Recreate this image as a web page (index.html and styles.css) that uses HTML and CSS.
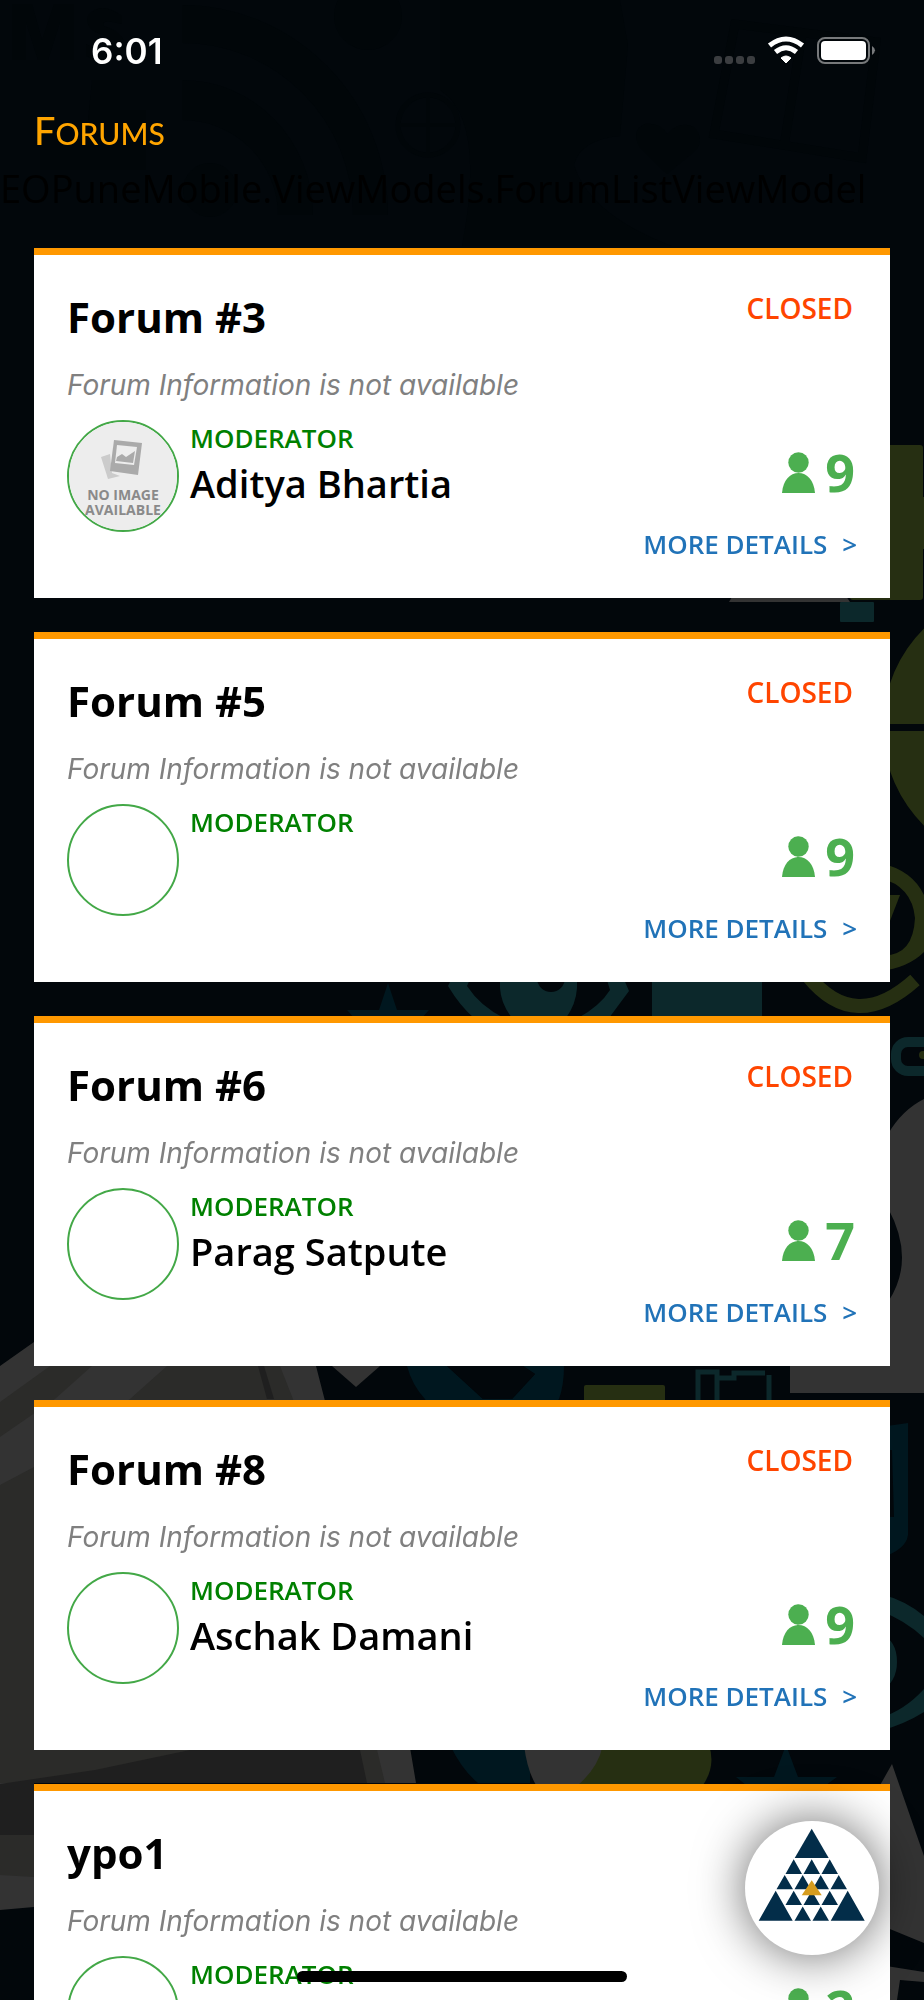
FILE: index.html
```html
<!DOCTYPE html>
<html lang="en">
<head>
    <meta charset="UTF-8">
    <meta name="viewport" content="width=device-width, initial-scale=1.0">
    <title>Forums</title>
    <link rel="stylesheet" href="styles.css">
</head>
<body>
    <svg class="backdrop" viewBox="0 0 924 2000" preserveAspectRatio="xMidYMid slice" aria-hidden="true">
        <rect width="924" height="2000" fill="#02070b"/>
        <!-- faint shapes behind the header -->
        <g fill="#010609">
            <path d="M182 5A206 210 0 0 1 388 215H353A171 172 0 0 0 182 43Z"/>
            <path d="M182 80A131 135 0 0 1 313 215H278A96 95 0 0 0 182 120Z"/>
            <circle cx="210" cy="190" r="27"/>
            <circle cx="368" cy="16" r="34"/>
            <path d="M440 0H620L628 45L620 136Q580 140 574 165Q590 215 672 246H462Q486 120 440 90Z"/>
            <path d="M667 174L640 148Q630 130 645 124Q660 122 667 134Q680 120 694 127Q706 140 694 152Z"/>
            <path d="M92 80H120V110H146V170H40V120H88Z"/>
            <path d="M12 60V4H32L42 40L54 4H74V60H60V22L48 60H38L26 22V60Z"/>
            <path d="M122 16Q100 0 88 16Q84 30 104 35Q118 42 98 50L86 44V56Q110 68 124 50Q128 34 104 26Q100 18 122 24Z"/>
        </g>
        <g fill="none" stroke="#010609" stroke-width="9">
            <path d="M735 24L876 42L862 158L714 134ZM802 34L784 146"/>
            <circle cx="428" cy="125" r="30" stroke-width="5"/>
            <path d="M398 125H458M428 95V155" stroke-width="4"/>
        </g>
        <!-- right edge -->
        <rect x="850" y="445" width="73" height="155" rx="3" fill="#262f12"/>
        <rect x="920" y="497" width="4" height="52" fill="#262f12"/>
        <path d="M736 590H842L850 602H729Z" fill="#333"/>
        <rect x="840" y="602" width="34" height="20" rx="1" fill="#0c282b"/>
        <path d="M883 724A139 139 0 0 1 1022 588V724ZM883 731A139 139 0 0 0 1022 866V731Z" fill="#262f12"/>
        <g fill="#262f12">
            <path d="M880 863Q912 870 924 895V952Q908 968 880 971V955Q913 958 915 918Q912 886 880 878Z"/>
            <path d="M880 895H900L888 926H880Z"/>
        </g>
        <path d="M808 976Q855 1034 915 980" fill="none" stroke="#262f12" stroke-width="14"/>
        <rect x="896" y="1042" width="60" height="29" rx="12" fill="none" stroke="#0c282b" stroke-width="10"/>
        <circle cx="923" cy="1055" r="4" fill="#262f12"/>
        <path d="M924 1099Q902 1110 888 1134V1208Q916 1260 888 1302H790V1393H924Z" fill="#333"/>
        <path d="M880 1427L908 1423V1535Q906 1550 880 1558V1517H894L892 1450H880Z" fill="#00171f"/>
        <path d="M880 1594Q905 1600 924 1616V1638Q905 1620 880 1611ZM880 1731Q905 1724 924 1712V1689Q905 1710 880 1718ZM880 1634Q897 1640 897 1662Q897 1682 880 1692Z" fill="#0c282b"/>
        <path d="M870 1803L892 1764L924 1856V1943L880 1925Z" fill="#333"/>
        <path d="M880 1965L924 1972V1982L900 1980L897 2000H880Z" fill="#333"/>
        <!-- strip between the second and third card -->
        <path d="M388 983L397 1010H429L420 1020H356L347 1010H379Z" fill="#00171f"/>
        <g fill="#0c282b">
            <path d="M456 970L448 986Q460 1006 474 1018H504Q480 1006 467 986L474 970Z"/>
            <path d="M620 970L629 991L609 1018H578Q600 1006 610 990L604 970Z"/>
            <path d="M500 970H577V988Q576 1004 566 1018H512Q501 1004 500 988Z"/>
            <rect x="652" y="975" width="110" height="45"/>
        </g>
        <circle cx="551" cy="978" r="14" fill="#02070b"/>
        <!-- strip between the third and fourth card -->
        <path d="M34 1342L0 1366V1910L34 1907V1783H416L402 1700L316 1366L300 1320H60Z" fill="#333"/>
        <g fill="#2b2b29">
            <path d="M50 1366H92L55 1399L0 1437V1402Z"/>
            <path d="M167 1366H280L293 1399L385 1783H0V1485L34 1467L130 1399Z"/>
            <path d="M0 1835H34V1877L0 1875Z"/>
        </g>
        <path d="M258 1366H264L274 1399H267Z" fill="#1f1f1f"/>
        <path d="M0 1784L95 1770L190 1750H360L367 1783H34V1835H0Z" fill="#1f1f1f"/>
        <path d="M332 1366H380L356 1387Z" fill="#333"/>
        <path d="M407 1366H447L483 1399L512 1399L535 1374L523 1366H564Q564 1385 559 1399L530 1430H440L425 1399Q412 1385 407 1366Z" fill="#00171f"/>
        <path d="M447 1366H523L535 1374L512 1399H483Z" fill="#02070b"/>
        <rect x="584" y="1385" width="81" height="20" rx="2" fill="#262f12"/>
        <path d="M698 1405V1372H717V1405M717 1378H734V1373H765M769 1375V1405" fill="none" stroke="#0c282b" stroke-width="5"/>
        <!-- strip above the last card -->
        <path d="M450 1745H530V1783H478Q462 1770 450 1745Z" fill="#00171f"/>
        <path d="M600 1745H709Q716 1766 703 1785H570Z" fill="#262f12"/>
        <path d="M524 1745H603Q598 1768 578 1785H536Q527 1770 524 1745Z" fill="#333"/>
        <path d="M786 1745L798 1777H837L826 1785H746L736 1777H774Z" fill="#00171f"/>
    </svg>

    <div class="app">
        <div class="status-bar">
            <span class="clock">6:01</span>
            <svg class="status-icons" width="164" height="30" viewBox="0 0 164 30" aria-hidden="true">
                <g fill="#3b3d40">
                    <rect x="1" y="20" width="8" height="8" rx="3"/>
                    <rect x="12" y="20" width="8" height="8" rx="3"/>
                    <rect x="23" y="20" width="8" height="8" rx="3"/>
                    <rect x="34" y="20" width="8" height="8" rx="3"/>
                </g>
                <g fill="none" stroke="#fff" stroke-width="5">
                    <path d="M56.500 9.500Q73 -3.500 89.500 9.500"/>
                    <path d="M62.500 16Q73 7.500 83.500 16"/>
                </g>
                <path d="M68 22Q73 18 78 22L73 27Z" fill="#fff" stroke="#fff" stroke-width="1"/>
                <rect x="105" y="2" width="51" height="25" rx="7" fill="none" stroke="#77797b" stroke-width="2"/>
                <rect x="108" y="5" width="45" height="19" rx="4" fill="#fff"/>
                <path d="M159 10Q165 14 159 19Z" fill="#77797b"/>
            </svg>
        </div>
        <h1 class="page-title">Forums</h1>
        <p class="view-name">EOPuneMobile.ViewModels.ForumListViewModel</p>

        <main class="forum-list">
            <article class="card">
                <div class="card-head">
                    <h2>Forum #3</h2>
                    <span class="status">CLOSED</span>
                </div>
                <p class="info">Forum Information is not available</p>
                <div class="card-body">
                    <div class="avatar">
                        <svg viewBox="0 0 108 108" role="img" aria-label="No image available">
                            <rect width="108" height="108" fill="#ededed"/>
                            <path d="M32 35L41 32L43 51L51 54L39 57Z" fill="#cbcbcb"/>
                            <path d="M45 18L73 21L69 53L41 49Z" fill="#aaa"/>
                            <path d="M48 23L68 25L65 43L46 41Z" fill="#ededed"/>
                            <path d="M48 35L53 32L57 35L66 29L64 41L47 39Z" fill="#aaa"/>
                            <text x="54" y="78">NO IMAGE</text>
                            <text x="54" y="93">AVAILABLE</text>
                        </svg>
                    </div>
                    <div class="moderator">
                        <p class="role">MODERATOR</p>
                        <p class="name">Aditya Bhartia</p>
                    </div>
                    <div class="side">
                        <p class="members">
                            <svg width="33" height="41" viewBox="0 0 33 41" aria-hidden="true"><circle cx="16.500" cy="10.500" r="10.200"/><path d="M0 41C1 28 8 21 16.500 21S32 28 33 41Z"/></svg>
                            <span>9</span>
                        </p>
                        <a class="more" href="#">MORE DETAILS <span>&gt;</span></a>
                    </div>
                </div>
            </article>

            <article class="card">
                <div class="card-head">
                    <h2>Forum #5</h2>
                    <span class="status">CLOSED</span>
                </div>
                <p class="info">Forum Information is not available</p>
                <div class="card-body">
                    <div class="avatar"></div>
                    <div class="moderator">
                        <p class="role">MODERATOR</p>
                        <p class="name"></p>
                    </div>
                    <div class="side">
                        <p class="members">
                            <svg width="33" height="41" viewBox="0 0 33 41" aria-hidden="true"><circle cx="16.500" cy="10.500" r="10.200"/><path d="M0 41C1 28 8 21 16.500 21S32 28 33 41Z"/></svg>
                            <span>9</span>
                        </p>
                        <a class="more" href="#">MORE DETAILS <span>&gt;</span></a>
                    </div>
                </div>
            </article>

            <article class="card">
                <div class="card-head">
                    <h2>Forum #6</h2>
                    <span class="status">CLOSED</span>
                </div>
                <p class="info">Forum Information is not available</p>
                <div class="card-body">
                    <div class="avatar"></div>
                    <div class="moderator">
                        <p class="role">MODERATOR</p>
                        <p class="name">Parag Satpute</p>
                    </div>
                    <div class="side">
                        <p class="members">
                            <svg width="33" height="41" viewBox="0 0 33 41" aria-hidden="true"><circle cx="16.500" cy="10.500" r="10.200"/><path d="M0 41C1 28 8 21 16.500 21S32 28 33 41Z"/></svg>
                            <span>7</span>
                        </p>
                        <a class="more" href="#">MORE DETAILS <span>&gt;</span></a>
                    </div>
                </div>
            </article>

            <article class="card">
                <div class="card-head">
                    <h2>Forum #8</h2>
                    <span class="status">CLOSED</span>
                </div>
                <p class="info">Forum Information is not available</p>
                <div class="card-body">
                    <div class="avatar"></div>
                    <div class="moderator">
                        <p class="role">MODERATOR</p>
                        <p class="name">Aschak Damani</p>
                    </div>
                    <div class="side">
                        <p class="members">
                            <svg width="33" height="41" viewBox="0 0 33 41" aria-hidden="true"><circle cx="16.500" cy="10.500" r="10.200"/><path d="M0 41C1 28 8 21 16.500 21S32 28 33 41Z"/></svg>
                            <span>9</span>
                        </p>
                        <a class="more" href="#">MORE DETAILS <span>&gt;</span></a>
                    </div>
                </div>
            </article>

            <article class="card">
                <div class="card-head">
                    <h2>ypo1</h2>
                </div>
                <p class="info">Forum Information is not available</p>
                <div class="card-body">
                    <div class="avatar"></div>
                    <div class="moderator">
                        <p class="role">MODERATOR</p>
                        <p class="name"></p>
                    </div>
                    <div class="side">
                        <p class="members">
                            <svg width="33" height="41" viewBox="0 0 33 41" aria-hidden="true"><circle cx="16.500" cy="10.500" r="10.200"/><path d="M0 41C1 28 8 21 16.500 21S32 28 33 41Z"/></svg>
                            <span>2</span>
                        </p>
                    </div>
                </div>
            </article>
        </main>
    </div>

    <button class="fab" type="button" aria-label="Menu">
        <svg viewBox="0 0 134 134" aria-hidden="true">
            <g fill="#032d49">
                <path d="M66.700 7.700L83.700 37H49.700Z"/>
                <path d="M48.700 38.300L57 53H40.500ZM66.700 38.300L75 53H58.500ZM84.700 38.300L93 53H76.500Z"/>
                <path d="M39.700 54L48 68.300H31.500ZM57.700 54L66 68.300H49.500ZM75.700 54L84 68.300H67.500ZM93.700 54L102 68.300H85.500Z"/>
                <path d="M48.700 69.700L57 84H40.500ZM66.700 69.700L75 84H58.500ZM84.700 69.700L93 84H76.500Z"/>
                <path d="M57.700 85.500L66 99.700H49.500ZM75.700 85.500L84 99.700H67.500Z"/>
                <path d="M30.700 69.700L47.700 99.700H13.700ZM102.700 69.700L119.700 99.700H85.700Z"/>
            </g>
            <path d="M66.700 59.300L76.700 74.300H56.700Z" fill="#d69c1e"/>
        </svg>
    </button>
    <div class="home-indicator"></div>
</body>
</html>
```

FILE: styles.css
```css
* {
    box-sizing: border-box;
}
body {
    margin: 0;
    background: #02070b;
    font-family: "Open Sans", sans-serif;
    overflow: hidden;
}
h1, h2, p {
    margin: 0;
}
.backdrop {
    position: fixed;
    top: 0;
    left: 0;
    width: 100%;
    height: 100%;
    z-index: -1;
}
.app {
    display: flex;
    flex-direction: column;
    height: 100vh;
}

/* header */
.status-bar {
    display: flex;
    justify-content: space-between;
    align-items: center;
    padding: 28px 47px 0 91px;
}
.clock {
    font: 600 35px/46px Inter, sans-serif;
    color: #fff;
}
.page-title {
    padding: 34px 34px 0;
    font: 500 30px/50px Lato, sans-serif;
    text-transform: uppercase;
    color: #ffa500;
}
.page-title::first-letter {
    font-size: 38px;
    line-height: 38px;
}
.view-name {
    padding-top: 4px;
    font-size: 38px;
    line-height: 52px;
    color: #000;
}

/* forum cards */
.forum-list {
    flex: 1;
    display: flex;
    flex-direction: column;
    gap: 34px;
    padding: 34px 34px 0;
    overflow-y: auto;
    scrollbar-width: none;
}
.card {
    flex-shrink: 0;
    padding: 34px 33px;
    background: #fff;
    border-top: 7px solid #ff9800;
}
.card-head {
    display: flex;
    justify-content: space-between;
}
.card h2 {
    font-size: 42px;
    line-height: 56px;
    font-weight: 700;
}
.status {
    padding-right: 4px;
    font-size: 28px;
    line-height: 38px;
    font-weight: 600;
    color: #ff4500;
}
.info {
    margin-top: 20px;
    font: italic 400 28px/40px Inter, sans-serif;
    color: #808080;
}
.card-body {
    display: flex;
    margin-top: 15px;
}
.avatar {
    width: 112px;
    height: 112px;
    border: 2px solid #43a847;
    border-radius: 50%;
    overflow: hidden;
}
.avatar svg {
    display: block;
}
.avatar text {
    font: 700 14px "Open Sans", sans-serif;
    text-anchor: middle;
    fill: #8a8a8a;
}
.moderator {
    flex: 1;
    padding-left: 11px;
}
.role {
    font-size: 26px;
    line-height: 36px;
    font-weight: 600;
    color: #008000;
}
.name {
    font-size: 38px;
    line-height: 54px;
    font-weight: 600;
}
.side {
    display: flex;
    flex-direction: column;
    align-items: flex-end;
    padding-top: 22px;
}
.members {
    display: flex;
    align-items: center;
    gap: 10px;
    padding-right: 2px;
    margin-bottom: 22px;
    font-size: 52px;
    line-height: 60px;
    font-weight: 700;
    color: #4caf50;
    fill: #4caf50;
}
.more {
    font-size: 26px;
    line-height: 40px;
    font-weight: 600;
    color: #2173b8;
    text-decoration: none;
}
.more span {
    padding-left: 8px;
}

/* overlays */
.fab {
    position: fixed;
    right: 45px;
    bottom: 45px;
    width: 134px;
    height: 134px;
    padding: 0;
    border: none;
    border-radius: 50%;
    background: #fff;
    box-shadow: 0 0 50px rgba(0, 0, 0, 0.6);
    cursor: pointer;
}
.fab svg {
    display: block;
}
.home-indicator {
    position: fixed;
    left: 50%;
    bottom: 18px;
    width: 330px;
    height: 11px;
    border-radius: 6px;
    background: #000;
    transform: translateX(-50%);
}
```
